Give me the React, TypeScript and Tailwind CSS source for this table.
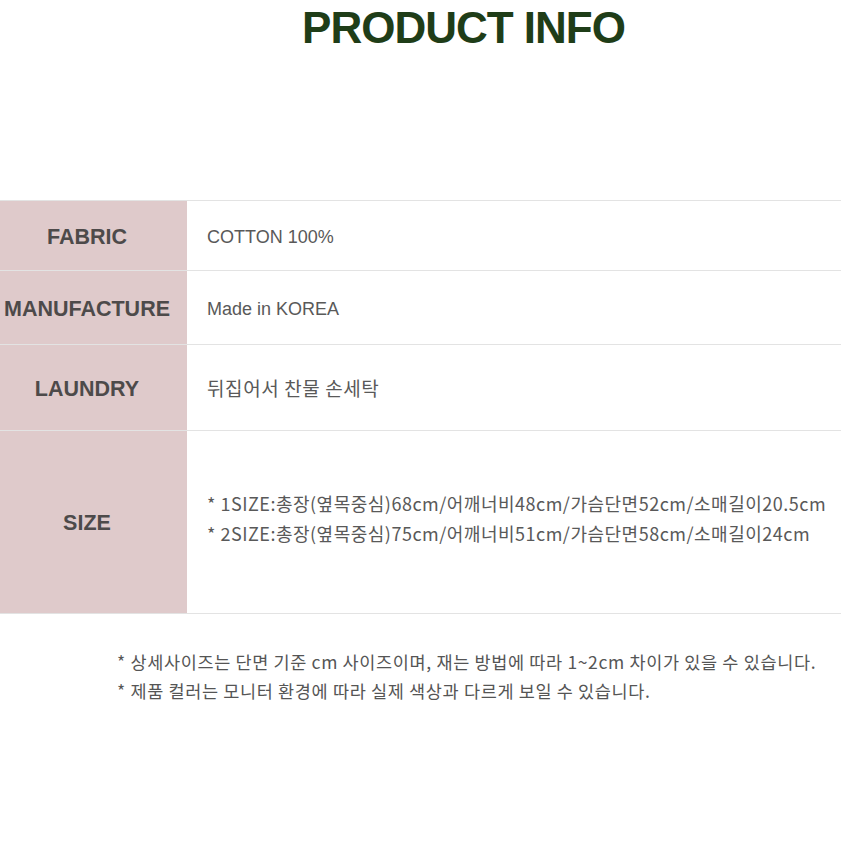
import React from 'react';

type Row = { label: string; h: string; kr?: string; value: string[] };

const rows: Row[] = [
  { label: 'FABRIC', h: 'h-[70px]', value: ['COTTON 100%'] },
  { label: 'MANUFACTURE', h: 'h-[74px]', value: ['Made in KOREA'] },
  {
    label: 'LAUNDRY',
    h: 'h-[86px]',
    kr: 'text-[19px] tracking-[0.6px]',
    value: ['뒤집어서 찬물 손세탁'],
  },
  {
    label: 'SIZE',
    h: 'h-[183px]',
    kr: 'text-[18px] tracking-[0.5px] pb-[8px]',
    value: [
      '* 1SIZE:총장(옆목중심)68cm/어깨너비48cm/가슴단면52cm/소매길이20.5cm',
      '* 2SIZE:총장(옆목중심)75cm/어깨너비51cm/가슴단면58cm/소매길이24cm',
    ],
  },
];

const App: React.FC = () => {
  return (
    <div className="w-[841px] h-[841px] bg-white overflow-hidden">
      <h1 className="pt-[6px] pl-[86px] text-center text-[44px] leading-[44px] font-bold tracking-[-1px] text-[#1f3d18] [font-family:'Liberation_Sans',Arial,sans-serif]">
        PRODUCT INFO
      </h1>

      <div className="mt-[150px] border-t border-[#e3e3e3]">
        {rows.map((row) => (
          <div key={row.label} className={`flex border-b border-[#e3e3e3] ${row.h}`}>
            <div className="w-[187px] shrink-0 bg-[#dfcacb] pr-[13px] pt-[3px] flex items-center justify-center text-[21.5px] font-bold text-[#4d4a4a] [font-family:'Liberation_Sans',Arial,sans-serif]">
              {row.label}
            </div>
            {row.kr ? (
              <div
                className={`flex-1 flex flex-col justify-center pl-[20px] gap-[8px] text-[#595959] [font-family:'Noto_Sans_CJK_KR',sans-serif] ${row.kr}`}
              >
                {row.value.map((v) => (
                  <p key={v} className="leading-[22px] whitespace-nowrap">
                    {v}
                  </p>
                ))}
              </div>
            ) : (
              <div className="flex-1 flex flex-col justify-center pl-[20px] pt-[2px] text-[18px] text-[#595959] [font-family:'Liberation_Sans',Arial,sans-serif]">
                {row.value.map((v) => (
                  <p key={v} className="leading-[22px]">
                    {v}
                  </p>
                ))}
              </div>
            )}
          </div>
        ))}
      </div>

      <div className="mt-[37px] pl-[117px] flex flex-col gap-[7px] text-[17.5px] leading-[22px] tracking-[0.65px] text-[#555] [font-family:'Noto_Sans_CJK_KR',sans-serif]">
        <p className="whitespace-nowrap">* 상세사이즈는 단면 기준 cm 사이즈이며, 재는 방법에 따라 1~2cm 차이가 있을 수 있습니다.</p>
        <p className="whitespace-nowrap">* 제품 컬러는 모니터 환경에 따라 실제 색상과 다르게 보일 수 있습니다.</p>
      </div>
    </div>
  );
};

export default App;
